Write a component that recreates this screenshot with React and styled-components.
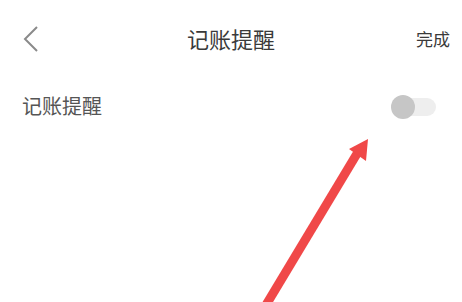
import React from "react";
import styled, { createGlobalStyle } from "styled-components";

const Global = createGlobalStyle`
  html, body { margin: 0; padding: 0; background: #fff; }
  body { font-family: "Noto Sans CJK SC", "Noto Sans", sans-serif; }
`;

const Page = styled.div`
  position: relative;
  width: 462px;
  height: 302px;
  overflow: hidden;
  background: #fff;
`;

const Header = styled.div`
  display: flex;
  align-items: center;
  justify-content: space-between;
  height: 56px;
  padding: 22px 12px 0 22px;
  box-sizing: border-box;
  position: relative;
`;

const Back = styled.div`
  width: 20px;
  height: 30px;
  display: flex;
  align-items: center;
`;

const Title = styled.div`
  position: absolute;
  left: 0;
  right: 0;
  top: 22px;
  text-align: center;
  font-size: 22px;
  line-height: 32px;
  color: #3a3a3a;
  pointer-events: none;
`;

const Done = styled.div`
  font-size: 17px;
  color: #3a3a3a;
  line-height: 24px;
`;

const Row = styled.div`
  display: flex;
  align-items: center;
  justify-content: space-between;
  padding: 36px 26px 0 22px;
`;

const Label = styled.div`
  font-size: 20px;
  line-height: 28px;
  color: #555;
`;

const Track = styled.div`
  position: relative;
  width: 44px;
  height: 18px;
  border-radius: 9px;
  background: #eeeeee;
  margin-top: 2px;
`;

const Knob = styled.div`
  position: absolute;
  left: -1px;
  top: -3px;
  width: 24px;
  height: 24px;
  border-radius: 50%;
  background: #c6c6c6;
`;

const Arrow = styled.svg`
  position: absolute;
  left: 0;
  top: 0;
`;

export default function App() {
  return (
    <Page>
      <Global />
      <Header>
        <Back>
          <svg width="18" height="28" viewBox="0 0 18 28">
            <path d="M15 2 L3 14 L15 26" fill="none" stroke="#8a8a8a" strokeWidth="2" />
          </svg>
        </Back>
        <Title>记账提醒</Title>
        <Done>完成</Done>
      </Header>
      <Row>
        <Label>记账提醒</Label>
        <Track>
          <Knob />
        </Track>
      </Row>
      <Arrow width="462" height="302" viewBox="0 0 462 302">
        <line x1="263" y1="310" x2="358" y2="152" stroke="#f04848" strokeWidth="9" />
        <polygon points="368,139 349,149 366,161" fill="#f04848" />
      </Arrow>
    </Page>
  );
}
